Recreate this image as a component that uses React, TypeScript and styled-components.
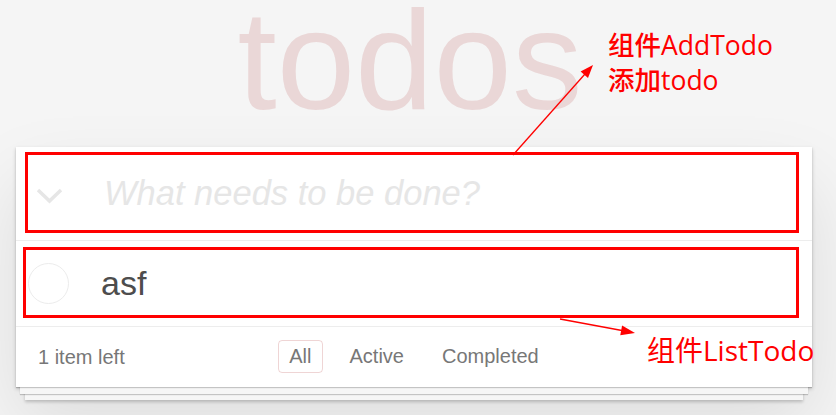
import styled, { createGlobalStyle } from "styled-components";

const GlobalStyle = createGlobalStyle`
  html, body {
    margin: 0;
    padding: 0;
    background: #f5f5f5;
  }
  body {
    font-family: "Liberation Sans", Arial, sans-serif;
    color: #4d4d4d;
  }
`;

const Page = styled.div`
  position: relative;
  width: 836px;
  height: 415px;
  overflow: hidden;
`;

const TodoApp = styled.section`
  width: 796px;
  margin-left: 16px;
`;

const Header = styled.header`
  height: 147px;
  padding-right: 8px;
`;

const Title = styled.h1`
  margin: 0;
  font-size: 141px;
  line-height: 120px;
  font-weight: 100;
  text-align: center;
  color: rgba(175, 47, 47, 0.15);
`;

const Card = styled.div`
  background: #fff;
  box-shadow: 0 1px 1px rgba(0, 0, 0, 0.2), 0 11px 0 -4px #f6f6f6,
    0 12px 1px -4px rgba(0, 0, 0, 0.2), 0 22px 0 -9px #f6f6f6,
    0 24px 3px -9px rgba(0, 0, 0, 0.2), 0 2px 4px rgba(0, 0, 0, 0.2),
    0 36px 72px rgba(0, 0, 0, 0.1);
`;

const Row = styled.div<{ $height: number }>`
  position: relative;
  display: flex;
  align-items: center;
  height: ${(p) => p.$height}px;
  border-bottom: 1px solid #ededed;
`;

const ToggleAll = styled.svg`
  width: 28px;
  height: 16px;
  margin-top: 4px;
  margin-left: 20px;
  margin-right: 40px;
  flex: none;
`;

const NewTodo = styled.div`
  font-size: 34.5px;
  line-height: 1.4;
  font-style: italic;
  color: #e6e6e6;
`;

const Check = styled.span`
  width: 41px;
  height: 41px;
  box-sizing: border-box;
  border: 1.5px solid #ececec;
  border-radius: 50%;
  margin-left: 12px;
  margin-right: 32px;
  flex: none;
`;

const TodoLabel = styled.div`
  font-size: 34px;
  line-height: 1.2;
  color: #4d4d4d;
`;

const Highlight = styled.div<{ $top: number; $bottom: number; $left: number }>`
  position: absolute;
  top: ${(p) => p.$top}px;
  bottom: ${(p) => p.$bottom}px;
  left: ${(p) => p.$left}px;
  right: 13px;
  border: 3px solid #ff0000;
`;

const Footer = styled.footer`
  display: grid;
  grid-template-columns: 1fr auto 1fr;
  align-items: center;
  height: 60px;
  padding: 0 22px;
  font-size: 20px;
  color: #777;
`;

const Count = styled.span`
  line-height: 20px;
`;

const Filters = styled.ul`
  display: flex;
  gap: 16px;
  margin: 0 0 2px;
  padding: 0;
  list-style: none;
`;

const Filter = styled.li<{ $selected?: boolean }>`
  padding: 4px 10px;
  border: 1px solid
    ${(p) => (p.$selected ? "rgba(175, 47, 47, 0.2)" : "transparent")};
  border-radius: 4px;
  color: #777;
`;

const Note = styled.div<{ $size: number; $left: number; $top: number; $weight?: number }>`
  position: absolute;
  left: ${(p) => p.$left}px;
  top: ${(p) => p.$top}px;
  font-family: "Open Sans", "Noto Sans CJK SC", sans-serif;
  font-size: ${(p) => p.$size}px;
  font-weight: ${(p) => p.$weight ?? 400};
  line-height: 35px;
  color: #ff0000;
  white-space: nowrap;
`;

const Arrows = styled.svg`
  position: absolute;
  inset: 0;
  pointer-events: none;
`;

export default function App() {
  return (
    <Page>
      <GlobalStyle />
      <TodoApp>
        <Header>
          <Title>todos</Title>
        </Header>
        <Card>
          <Row $height={93}>
            <ToggleAll viewBox="0 0 28 16">
              <polyline
                points="2,2 13.5,13 25,2"
                fill="none"
                stroke="#e6e6e6"
                strokeWidth="3.5"
              />
            </ToggleAll>
            <NewTodo>What needs to be done?</NewTodo>
            <Highlight $top={5} $bottom={7} $left={9} />
          </Row>
          <Row $height={85}>
            <Check />
            <TodoLabel>asf</TodoLabel>
            <Highlight $top={6} $bottom={8} $left={7} />
          </Row>
          <Footer>
            <Count>1 item left</Count>
            <Filters>
              <Filter $selected>All</Filter>
              <Filter>Active</Filter>
              <Filter>Completed</Filter>
            </Filters>
          </Footer>
        </Card>
      </TodoApp>

      <Note $size={26.5} $left={608} $top={28} $weight={500}>
        组件AddTodo
        <br />
        添加todo
      </Note>
      <Note $size={28} $left={647} $top={333}>
        组件ListTodo
      </Note>

      <Arrows width="836" height="415" viewBox="0 0 836 415">
        <line x1="513" y1="155" x2="585" y2="74" stroke="#ff0000" strokeWidth="1.3" />
        <polygon points="593,65 588,78 580.6,71.4" fill="#ff0000" />
        <line x1="560" y1="319" x2="622" y2="330.5" stroke="#ff0000" strokeWidth="1.3" />
        <polygon points="635,333 620.3,335.3 622.1,325.5" fill="#ff0000" />
      </Arrows>
    </Page>
  );
}
